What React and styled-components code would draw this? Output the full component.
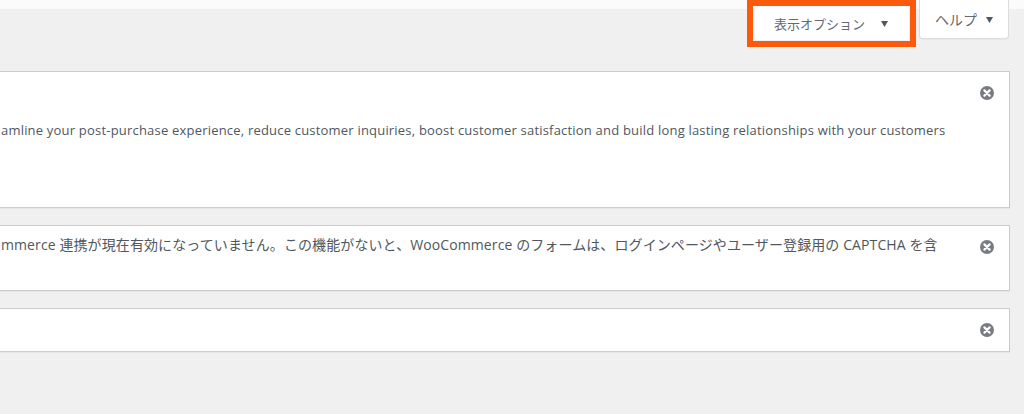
import React from 'react';
import styled, { createGlobalStyle } from 'styled-components';

const GlobalStyle = createGlobalStyle`
  html, body {
    margin: 0;
    padding: 0;
    background: #f0f0f1;
    overflow: hidden;
  }
  body {
    font-family: "Open Sans", "Noto Sans CJK JP", sans-serif;
    font-size: 13px;
    color: #50575e;
  }
`;

const Page = styled.div`
  width: 1024px;
  height: 414px;
  overflow: hidden;
`;

const Header = styled.div`
  display: flex;
  justify-content: flex-end;
  align-items: flex-start;
  gap: 3px;
  height: 47px;
  padding-right: 15px;
  background: linear-gradient(#fbfbfb 0 9px, transparent 9px);
`;

// the orange frame drawn over the screenshot
const Highlight = styled.div`
  box-sizing: border-box;
  height: 47px;
  border: 6px solid #fa5a0c;
  padding: 1px;
`;

const ToggleButton = styled.button`
  display: flex;
  align-items: center;
  gap: ${({ $gap }) => $gap}px;
  height: ${({ $h }) => $h}px;
  margin: 0;
  padding: ${({ $pt }) => $pt || 0}px ${({ $pr }) => $pr}px 0 ${({ $pl }) => $pl}px;
  box-sizing: border-box;
  background: #fff;
  border: ${({ $framed }) => ($framed ? 'none' : '1px solid #dcdcde')};
  border-top: none;
  border-radius: ${({ $framed }) => ($framed ? '0' : '0 0 4px 4px')};
  box-shadow: ${({ $framed }) => ($framed ? 'none' : '0 1px 1px rgba(0,0,0,.04)')};
  font-family: inherit;
  font-size: ${({ $size }) => $size || 13}px;
  line-height: 18px;
  color: #646970;
  cursor: pointer;
`;

const Arrow = () => (
  <svg width="7" height="6" viewBox="0 0 7 6">
    <path d="M0 0h7L3.5 6z" fill="#50575e" />
  </svg>
);

const Notices = styled.div`
  display: flex;
  flex-direction: column;
  gap: 17px;
  margin: 24px 14px 0 -20px;
`;

const Notice = styled.div`
  display: flex;
  align-items: flex-start;
  min-height: ${({ $h }) => $h}px;
  box-sizing: border-box;
  background: #fff;
  border: 1px solid #c9cbce;
  box-shadow: 0 1px 1px rgba(0,0,0,.04);
`;

const NoticeText = styled.p`
  flex: 1;
  min-width: 0;
  margin: 0;
  padding: ${({ $pt }) => $pt}px 12px 0 20px;
  font-size: ${({ $size }) => $size || 13}px;
  letter-spacing: ${({ $ls }) => $ls || 0}px;
  line-height: 19px;
  white-space: nowrap;
`;

const Dismiss = styled.button`
  flex: none;
  width: 14px;
  height: 14px;
  margin: 14px 15px 0 0;
  padding: 0;
  border: none;
  background: none;
  cursor: pointer;
`;

const DismissIcon = () => (
  <svg width="14" height="14" viewBox="0 0 14 14">
    <circle cx="7" cy="7" r="7" fill="#787c82" />
    <path d="M4.4 4.4l5.2 5.2M9.6 4.4l-5.2 5.2" stroke="#fff" strokeWidth="2.2" strokeLinecap="round" />
  </svg>
);

export default function App() {
  return (
    <Page>
      <GlobalStyle />
      <Header>
        <Highlight>
          <ToggleButton $framed $h={33} $pl={20} $pr={21} $gap={16}>
            表示オプション<Arrow />
          </ToggleButton>
        </Highlight>
        <ToggleButton $h={39} $pl={15} $pr={15} $gap={9} $pt={1} $size={14}>
          ヘルプ<Arrow />
        </ToggleButton>
      </Header>

      <Notices>
        <Notice $h={137}>
          <NoticeText $pt={49} $ls={0.2}>
            amline your post-purchase experience, reduce customer inquiries, boost customer satisfaction and build long lasting relationships with your customers
          </NoticeText>
          <Dismiss><DismissIcon /></Dismiss>
        </Notice>
        <Notice $h={66}>
          <NoticeText $pt={9} $size={14} $ls={0.1}>
            mmerce 連携が現在有効になっていません。この機能がないと、WooCommerce のフォームは、ログインページやユーザー登録用の CAPTCHA を含
          </NoticeText>
          <Dismiss><DismissIcon /></Dismiss>
        </Notice>
        <Notice $h={44}>
          <NoticeText $pt={9} />
          <Dismiss><DismissIcon /></Dismiss>
        </Notice>
      </Notices>
    </Page>
  );
}
